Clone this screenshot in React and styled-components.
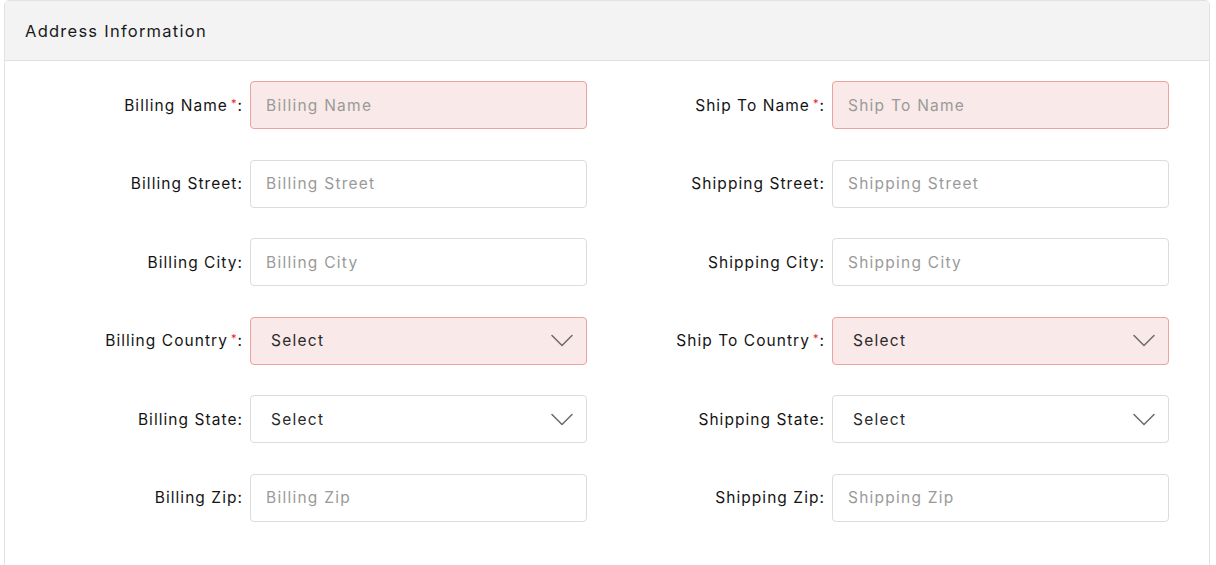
import React from "react";
import styled, { createGlobalStyle } from "styled-components";

const Global = createGlobalStyle`
  html, body { margin: 0; padding: 0; background: #fff; }
  body { font-family: Inter, "Open Sans", sans-serif; color: #222; }
  * { box-sizing: border-box; }
`;

const Card = styled.section`
  margin: 0 0 0 4px;
  width: 1206px;
  border: 1px solid #e2e2e2;
  border-radius: 5px 5px 0 0;
  background: #fff;
  min-height: 580px;
`;

const CardHeader = styled.header`
  height: 60px;
  background: #f3f3f3;
  border-bottom: 1px solid #e0e0e0;
  border-radius: 5px 5px 0 0;
  display: flex;
  align-items: center;
  padding: 0 0 0 20px;
  font-size: 16.5px;
  font-weight: 400;
  letter-spacing: 1.25px;
  color: #1a1a1a;
`;

const Body = styled.div`
  padding: 20px 12px 40px 12px;
  display: grid;
  grid-template-columns: 570px 570px;
  column-gap: 12px;
`;

const Column = styled.div`
  display: grid;
  grid-template-columns: 226px 337px;
  column-gap: 7px;
  row-gap: 30.5px;
  align-items: center;
`;

const Label = styled.label`
  text-align: right;
  font-size: 15.5px;
  font-weight: 400;
  letter-spacing: 1.05px;
  color: #141414;
  white-space: nowrap;
`;

const Star = styled.span`
  color: #e0242a;
  font-size: 11px;
  vertical-align: 4px;
  margin-left: 3px;
`;

const Field = styled.div`
  height: 48px;
  border: 1px solid ${(p) => (p.$required ? "#eaa39d" : "#dcdcdc")};
  background: ${(p) => (p.$required ? "#f9e9e8" : "#fff")};
  border-radius: 4px;
  display: flex;
  align-items: center;
  padding: ${(p) => (p.$select ? "0 13px 0 20px" : "0 0 0 15px")};
  font-size: 15.5px;
  font-weight: 400;
  letter-spacing: 1.25px;
  color: ${(p) => (p.$select ? "#2a2a2a" : "#9a9a9a")};
  justify-content: space-between;
`;

const Chevron = () => (
  <svg width="22" height="13" viewBox="0 0 22 13" fill="none">
    <path d="M1 1.5 L11 11.5 L21 1.5" stroke="#6a6a6a" strokeWidth="1.5" strokeLinecap="round" strokeLinejoin="round" />
  </svg>
);

const left = [
  { label: "Billing Name", req: true, ph: "Billing Name" },
  { label: "Billing Street", ph: "Billing Street" },
  { label: "Billing City", ph: "Billing City" },
  { label: "Billing Country", req: true, select: true },
  { label: "Billing State", select: true },
  { label: "Billing Zip", ph: "Billing Zip" },
];

const right = [
  { label: "Ship To Name", req: true, ph: "Ship To Name" },
  { label: "Shipping Street", ph: "Shipping Street" },
  { label: "Shipping City", ph: "Shipping City" },
  { label: "Ship To Country", req: true, select: true },
  { label: "Shipping State", select: true },
  { label: "Shipping Zip", ph: "Shipping Zip" },
];

const FormColumn = ({ rows }) => (
  <Column>
    {rows.map((r) => (
      <React.Fragment key={r.label}>
        <Label>
          {r.label}
          {r.req && <Star>*</Star>}:
        </Label>
        <Field $required={r.req} $select={r.select}>
          {r.select ? (
            <>
              <span>Select</span>
              <Chevron />
            </>
          ) : (
            <span>{r.ph}</span>
          )}
        </Field>
      </React.Fragment>
    ))}
  </Column>
);

export default function App() {
  return (
    <>
      <Global />
      <Card>
        <CardHeader>Address Information</CardHeader>
        <Body>
          <FormColumn rows={left} />
          <FormColumn rows={right} />
        </Body>
      </Card>
    </>
  );
}
